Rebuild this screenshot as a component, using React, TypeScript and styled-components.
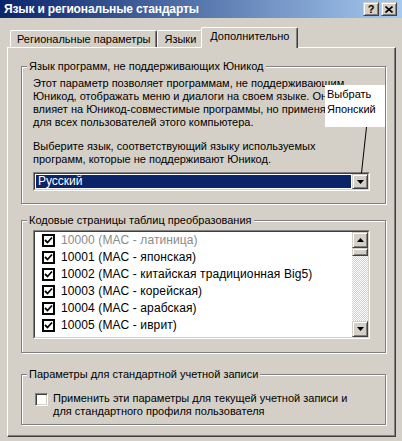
import React from "react";
import styled, { createGlobalStyle } from "styled-components";

const GlobalStyle = createGlobalStyle`
  html, body { margin: 0; padding: 0; background: #d4d0c8; }
  body { font-family: "Liberation Sans", Arial, sans-serif; font-size: 11px; }
`;

const FONT = `"Liberation Sans", Arial, sans-serif`;

const Window = styled.div`
  position: relative;
  width: 402px;
  height: 441px;
  background: #d4d0c8;
  overflow: hidden;
  color: #000;
  font-family: ${FONT};
  font-size: 11px;
  line-height: 13px;
`;

const TitleBar = styled.div`
  height: 18px;
  display: flex;
  align-items: center;
  justify-content: space-between;
  padding: 0 5px 0 4px;
  background: linear-gradient(to right, #0a246a, #a6caf0);
`;

const Title = styled.span`
  color: #fff;
  font-weight: bold;
  font-size: 12px;
  letter-spacing: -0.15px;
  white-space: nowrap;
`;

const TitleButtons = styled.div`
  display: flex;
  gap: 2px;
`;

const RaisedButton = styled.div<{ $w: number; $h: number }>`
  box-sizing: border-box;
  width: ${(p) => p.$w}px;
  height: ${(p) => p.$h}px;
  background: #d4d0c8;
  border-top: 1px solid #d4d0c8;
  border-left: 1px solid #d4d0c8;
  border-right: 1px solid #404040;
  border-bottom: 1px solid #404040;
  box-shadow: inset 1px 1px #fff, inset -1px -1px #808080;
  display: flex;
  align-items: center;
  justify-content: center;
  flex: none;
  font-weight: bold;
  font-size: 11px;
  line-height: 11px;
`;

const Body = styled.div`
  padding: 9px 6px 0 7px;
`;

const TabStrip = styled.div`
  display: flex;
  align-items: flex-end;
  height: 20px;
  padding-left: 3px;
`;

const Tab = styled.div<{ $active?: boolean }>`
  position: relative;
  z-index: ${(p) => (p.$active ? 2 : 1)};
  box-sizing: border-box;
  height: ${(p) => (p.$active ? 21 : 17)}px;
  margin: ${(p) => (p.$active ? "0 -2px -1px -2px" : "0")};
  padding: 2px ${(p) => (p.$active ? 8 : 6)}px 0;
  background: #d4d0c8;
  border-top: 1px solid #fff;
  border-left: 1px solid #fff;
  border-right: 1px solid #404040;
  border-radius: 2px 2px 0 0;
  box-shadow: inset -1px 0 #808080;
  white-space: nowrap;
`;

const Panel = styled.div`
  position: relative;
  z-index: 1;
  box-sizing: border-box;
  height: 390px;
  display: flex;
  flex-direction: column;
  padding: 18px 9px 12px 13px;
  border-top: 1px solid #fff;
  border-left: 1px solid #fff;
  border-right: 1px solid #404040;
  border-bottom: 1px solid #404040;
  box-shadow: inset -1px -1px #808080;
`;

const GroupBox = styled.div<{ $top: number; $pad: string }>`
  display: flex;
  flex-direction: column;
  margin-top: ${(p) => p.$top}px;
  padding: ${(p) => p.$pad};
  border: 1px solid #808080;
  box-shadow: inset 1px 1px #fff, 1px 1px #fff;
`;

const Legend = styled.div<{ $shift: number }>`
  align-self: flex-start;
  margin: -7px 0 0 ${(p) => p.$shift}px;
  padding: 0 2px;
  background: #d4d0c8;
  line-height: 13px;
  white-space: nowrap;
`;

const Paragraph = styled.div<{ $top: number }>`
  margin-top: ${(p) => p.$top}px;
  line-height: 13px;
  white-space: nowrap;
`;

const SunkenOuter = styled.div<{ $top: number; $h: number }>`
  margin-top: ${(p) => p.$top}px;
  height: ${(p) => p.$h}px;
  box-sizing: border-box;
  border-top: 1px solid #808080;
  border-left: 1px solid #808080;
  border-right: 1px solid #fff;
  border-bottom: 1px solid #fff;
  display: flex;
`;

const SunkenInner = styled.div`
  flex: 1;
  display: flex;
  min-width: 0;
  border-top: 1px solid #404040;
  border-left: 1px solid #404040;
  border-right: 1px solid #d4d0c8;
  border-bottom: 1px solid #d4d0c8;
  background: #fff;
`;

const ComboField = styled.div`
  flex: 1;
  margin: 1px;
  padding-left: 2px;
  background: #0a246a;
  color: #fff;
  font-size: 12px;
  display: flex;
  align-items: center;
`;

const ListItems = styled.div`
  flex: 1;
  display: flex;
  flex-direction: column;
`;

const Row = styled.div<{ $dim?: boolean }>`
  height: 17px;
  display: flex;
  align-items: center;
  padding-left: 7px;
  gap: 6px;
  font-size: 12px;
  letter-spacing: 0.1px;
  color: ${(p) => (p.$dim ? "#8a8a8a" : "#000")};
  white-space: nowrap;
`;

const FlatCheck = styled.div`
  box-sizing: border-box;
  width: 13px;
  height: 13px;
  border: 2px solid #000;
  background: #fff;
  display: flex;
  align-items: center;
  justify-content: center;
  flex: none;
`;

const Scrollbar = styled.div`
  width: 16px;
  display: flex;
  flex-direction: column;
  flex: none;
`;

const Track = styled.div`
  flex: 1;
  background: repeating-conic-gradient(#d4d0c8 0 25%, #fff 0 50%) 0 0 / 2px 2px;
`;

const CheckRow = styled.div`
  margin-top: 10px;
  display: flex;
  align-items: flex-start;
  gap: 5px;
  padding-top: 1px;
`;

const SunkenCheck = styled.div`
  box-sizing: border-box;
  width: 13px;
  height: 13px;
  margin-top: 1px;
  flex: none;
  background: #fff;
  border-top: 1px solid #808080;
  border-left: 1px solid #808080;
  border-right: 1px solid #fff;
  border-bottom: 1px solid #fff;
  box-shadow: inset 1px 1px #404040, inset -1px -1px #d4d0c8;
`;

const CheckLabel = styled.div`
  line-height: 13px;
`;

const Callout = styled.div`
  position: absolute;
  z-index: 5;
  left: 325px;
  top: 85px;
  width: 60px;
  height: 42px;
  box-sizing: border-box;
  padding: 2px 0 0 2px;
  background: #fff;
  line-height: 15px;
  white-space: nowrap;
`;

const Pointer = styled.svg`
  position: absolute;
  z-index: 5;
  left: 0;
  top: 0;
  pointer-events: none;
`;

const Arrow = ({ up }: { up?: boolean }) => (
  <svg width="7" height="4" viewBox="0 0 7 4">
    <polygon points={up ? "3.5,0 7,4 0,4" : "0,0 7,0 3.5,4"} fill="#000" />
  </svg>
);

const Tick = () => (
  <svg width="9" height="9" viewBox="0 0 9 9">
    <polyline points="1,4 3.5,6.5 8,1.5" fill="none" stroke="#000" strokeWidth="1.8" />
  </svg>
);

const items = [
  "10000 (MAC - латиница)",
  "10001 (MAC - японская)",
  "10002 (MAC - китайская традиционная Big5)",
  "10003 (MAC - корейская)",
  "10004 (MAC - арабская)",
  "10005 (MAC - иврит)",
];

export default function App() {
  return (
    <>
      <GlobalStyle />
      <Window>
        <TitleBar>
          <Title>Язык и региональные стандарты</Title>
          <TitleButtons>
            <RaisedButton $w={16} $h={14}>?</RaisedButton>
            <RaisedButton $w={16} $h={14}>
              <svg width="8" height="7" viewBox="0 0 8 7">
                <path d="M0.5 0.5 L7.5 6.5 M7.5 0.5 L0.5 6.5" stroke="#000" strokeWidth="1.6" />
              </svg>
            </RaisedButton>
          </TitleButtons>
        </TitleBar>
        <Body>
          <TabStrip>
            <Tab>Региональные параметры</Tab>
            <Tab>Языки</Tab>
            <Tab $active>Дополнительно</Tab>
          </TabStrip>
          <Panel>
            <GroupBox $top={0} $pad="0 15px 12px 11px">
              <Legend $shift={-6}>Язык программ, не поддерживающих Юникод</Legend>
              <Paragraph $top={4}>
                Этот параметр позволяет программам, не поддерживающим
                <br />
                Юникод, отображать меню и диалоги на своем языке. Он
                <br />
                влияет на Юникод-совместимые программы, но применяется
                <br />
                для всех пользователей этого компьютера.
              </Paragraph>
              <Paragraph $top={11}>
                Выберите язык, соответствующий языку используемых
                <br />
                программ, которые не поддерживают Юникод.
              </Paragraph>
              <SunkenOuter $top={6} $h={19}>
                <SunkenInner>
                  <ComboField>Русский</ComboField>
                  <RaisedButton $w={16} $h={15}>
                    <Arrow />
                  </RaisedButton>
                </SunkenInner>
              </SunkenOuter>
            </GroupBox>

            <GroupBox $top={16} $pad="0 15px 13px 11px">
              <Legend $shift={-6}>Кодовые страницы таблиц преобразования</Legend>
              <SunkenOuter $top={3} $h={109}>
                <SunkenInner>
                  <ListItems>
                    {items.map((t, i) => (
                      <Row key={t} $dim={i === 0}>
                        <FlatCheck>
                          <Tick />
                        </FlatCheck>
                        {t}
                      </Row>
                    ))}
                  </ListItems>
                  <Scrollbar>
                    <RaisedButton $w={16} $h={16}>
                      <Arrow up />
                    </RaisedButton>
                    <RaisedButton $w={16} $h={8} />
                    <Track />
                    <RaisedButton $w={16} $h={16}>
                      <Arrow />
                    </RaisedButton>
                  </Scrollbar>
                </SunkenInner>
              </SunkenOuter>
            </GroupBox>

            <GroupBox $top={21} $pad="0 15px 6px 13px">
              <Legend $shift={-8}>Параметры для стандартной учетной записи</Legend>
              <CheckRow>
                <SunkenCheck />
                <CheckLabel>
                  Применить эти параметры для текущей учетной записи и
                  <br />
                  для стандартного профиля пользователя
                </CheckLabel>
              </CheckRow>
            </GroupBox>
          </Panel>
        </Body>
        <Callout>
          Выбрать
          <br />
          Японский
        </Callout>
        <Pointer width="402" height="441" viewBox="0 0 402 441">
          <line x1="366.5" y1="127" x2="361.5" y2="173" stroke="#000" strokeWidth="1" />
        </Pointer>
      </Window>
    </>
  );
}
